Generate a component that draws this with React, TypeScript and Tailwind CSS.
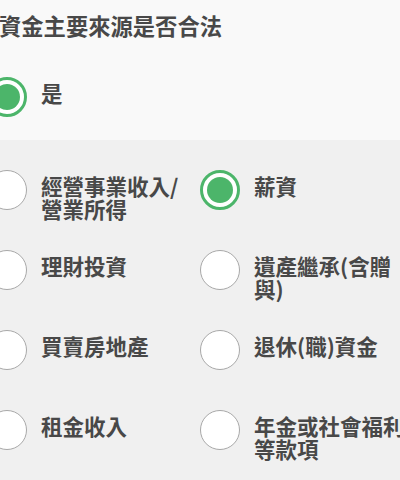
import React from "react";

const font = { fontFamily: '"Noto Sans CJK TC", "Noto Sans", sans-serif' };

function Radio({ checked }: { checked?: boolean }) {
  if (checked) {
    return (
      <div className="flex h-[40px] w-[40px] shrink-0 items-center justify-center rounded-full border-[3px] border-[#4cb56a] bg-white">
        <div className="h-[26px] w-[26px] rounded-full bg-[#4cb56a]" />
      </div>
    );
  }
  return <div className="h-[40px] w-[40px] shrink-0 rounded-full border-[1.5px] border-[#a8a8a8] bg-white" />;
}

function Option({ label, checked }: { label: string; checked?: boolean }) {
  return (
    <div className="flex h-[80px] items-start gap-[14px]">
      <Radio checked={checked} />
      <div className="mt-[4px] w-[152px] text-[21.5px] font-bold leading-[23px] text-[#484848]">{label}</div>
    </div>
  );
}

export default function App() {
  const options: [string, boolean][] = [
    ["經營事業收入/營業所得", false],
    ["薪資", true],
    ["理財投資", false],
    ["遺產繼承(含贈與)", false],
    ["買賣房地產", false],
    ["退休(職)資金", false],
    ["租金收入", false],
    ["年金或社會福利等款項", false],
  ];
  return (
    <div className="h-[480px] w-[400px] overflow-hidden bg-[#f0f0f0]" style={font}>
      <div className="h-[140px] bg-[#f9f9f9] pt-[10px]">
        <div className="ml-[-1px] text-[22.3px] font-bold leading-[30px] text-[#484848]">資金主要來源是否合法</div>
        <div className="ml-[-13px] mt-[37px] flex items-start gap-[14px]">
          <Radio checked />
          <div className="mt-[4px] text-[21.5px] font-bold leading-[23px] text-[#484848]">是</div>
        </div>
      </div>
      <div className="ml-[-13px] grid w-[426px] grid-cols-[213px_213px] pt-[30px]">
        {options.map(([l, c]) => (
          <Option key={l} label={l} checked={c} />
        ))}
      </div>
    </div>
  );
}
